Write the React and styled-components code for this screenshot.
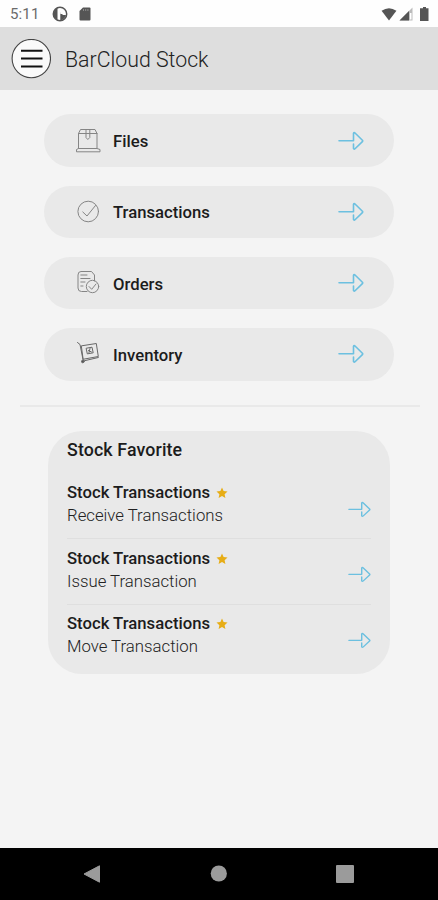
import React from 'react';
import styled, { createGlobalStyle } from 'styled-components';

const GlobalStyle = createGlobalStyle`
  * {
    box-sizing: border-box;
  }
  body {
    margin: 0;
    background: #f4f4f4;
    font-family: Roboto, 'Liberation Sans', sans-serif;
  }
`;

const S = {
  Screen: styled.div`
    display: flex;
    flex-direction: column;
    width: 438px;
    height: 900px;
    overflow: hidden;
    background: #f4f4f4;
  `,
  StatusBar: styled.div`
    display: flex;
    align-items: center;
    height: 27.4px;
    flex: none;
    padding: 1px 6px 0 10px;
    background: #fefefe;
    color: #6b6b6b;
  `,
  Clock: styled.span`
    width: 42px;
    font-size: 15px;
    line-height: 18px;
    letter-spacing: 0.15px;
  `,
  StatusIcons: styled.div`
    display: flex;
    align-items: center;
    gap: ${(props) => props.$gap}px;
    margin-left: ${(props) => (props.$right ? 'auto' : 0)};
  `,
  Header: styled.header`
    display: flex;
    align-items: center;
    gap: 14px;
    height: 62.6px;
    flex: none;
    padding: 0 11px;
    background: #dedede;
  `,
  MenuButton: styled.button`
    width: 40px;
    height: 40px;
    padding: 0;
    border: 0;
    border-radius: 50%;
    background: none;
  `,
  Title: styled.h1`
    margin: 1px 0 0;
    font-size: 21.3px;
    font-weight: 300;
    color: #222;
  `,
  Menu: styled.nav`
    display: flex;
    flex-direction: column;
    gap: 18.8px;
    padding: 24.3px 44px 24.8px;
  `,
  MenuItem: styled.button`
    display: flex;
    align-items: center;
    width: 350px;
    height: 52.5px;
    padding: 0 30px 0 31px;
    border: 0;
    border-radius: 27px;
    background: #e9e9e9;
    color: #1c1c1c;
    font-family: inherit;
  `,
  MenuLabel: styled.span`
    flex: 1;
    margin: 3px 0 0 12px;
    text-align: left;
    font-size: 16.7px;
    font-weight: 500;
    line-height: 20px;
  `,
  Divider: styled.hr`
    width: 400px;
    height: 2px;
    flex: none;
    margin: 0 18px 23.5px 20px;
    border: 0;
    background: #e9e9e9;
  `,
  Card: styled.section`
    width: 342px;
    height: 243px;
    flex: none;
    margin-left: 48px;
    padding: 9px 19px 0;
    border-radius: 34px;
    background: #e9e9e9;
  `,
  CardTitle: styled.h2`
    margin: 0 0 14px;
    font-size: 17.8px;
    line-height: 20px;
    font-weight: 500;
    letter-spacing: 0.12px;
    color: #1c1c1c;
  `,
  Favorite: styled.div`
    display: flex;
    align-items: center;
    justify-content: space-between;
    height: 65.3px;
    border-bottom: ${(props) => (props.$last ? 'none' : '1px solid #dfdfdf')};
  `,
  FavoriteText: styled.div`
    padding-bottom: 2.6px;
  `,
  FavoriteArrow: styled.div`
    display: flex;
    padding-top: 7px;
  `,
  FavoriteName: styled.div`
    display: flex;
    align-items: center;
    gap: 6px;
    font-size: 16.7px;
    line-height: 22px;
    font-weight: 500;
    color: #1c1c1c;
  `,
  FavoriteAction: styled.div`
    font-size: 16.75px;
    line-height: 23px;
    font-weight: 300;
    color: #222;
  `,
  NavBar: styled.footer`
    display: flex;
    align-items: center;
    justify-content: space-between;
    height: 52.5px;
    flex: none;
    margin-top: auto;
    padding: 0 84px 0 83px;
    background: #000;
  `,
};

const Arrow = ({ small }) => (
  <svg
    width={small ? 23 : 26}
    height={small ? 17 : 20}
    viewBox="0 0 26 20"
    preserveAspectRatio="none"
    fill="none"
    stroke="#6cc0e0"
    strokeWidth="1.6"
    strokeLinecap="round"
    strokeLinejoin="round"
  >
    <path d="M1 9.8H15.5V2.3Q16 1 17.3 2.3L24.4 9.3Q25 10 24.4 10.7L17.3 17.5Q16 18.8 15.5 17.5V13" />
  </svg>
);

const iconProps = {
  width: 26,
  height: 26,
  viewBox: '0 0 26 26',
  fill: 'none',
  stroke: '#858585',
  strokeWidth: 1,
  strokeLinecap: 'round',
  strokeLinejoin: 'round',
};

const BoxIcon = () => (
  <svg {...iconProps}>
    <path d="M3.5 5.5L5.5 1.5H20L22 5.5V20.5H3.5V5.5H22M11 1.5V9.5L12.8 11.5L14.8 9.5V1.5" />
    <path d="M3.5 20.5L1.5 21.5V23.8H25V21.5L22 20.5" />
  </svg>
);

const CheckIcon = () => (
  <svg {...iconProps}>
    <circle cx="13.2" cy="12.5" r="10.3" />
    <path d="M7.8 13L12 17L20.5 6.5" />
  </svg>
);

const OrderIcon = () => (
  <svg {...iconProps}>
    <path d="M12 21.5H6.5Q3 21.5 3 18V5Q3 1.5 6 1.5H16.5L19.5 5V11M5.8 5H12M5.8 8.5H15M5.8 12H10M5.8 16H8" />
    <circle cx="17.5" cy="16.5" r="6.2" />
    <path d="M14 16.5L16.7 19.3L21 14" />
  </svg>
);

const InventoryIcon = () => (
  <svg {...iconProps} stroke="#686868">
    <path d="M2.5 1.5L5 3.5L8.3 20L23.3 16.5" />
    <path d="M6.7 4.8L21.3 2.5L23.3 15.5L8.5 18.2Z" />
    <path d="M11.5 7.2L17 6.2L18.2 11.8L12.7 12.8ZM13.5 9.5L16.5 11M15 7.5L14 11.5" />
    <circle cx="7.8" cy="20.5" r="1.3" fill="#555" />
  </svg>
);

const Star = () => (
  <svg width="12" height="12" viewBox="0 0 24 24" fill="#e7ad16">
    <path d="M12 1L15.2 8.2L23 9L17.2 14.3L18.8 22L12 18L5.2 22L6.8 14.3L1 9L8.8 8.2Z" />
  </svg>
);

const MenuIcon = () => (
  <svg width="40" height="40" viewBox="0 0 40 40">
    <circle cx="20.3" cy="19.6" r="19.2" fill="#fafafa" stroke="#444" strokeWidth="1.1" />
    <path d="M10 11.8H31.5M10 19.5H31.5M10 27.5H31.5" stroke="#111" strokeWidth="2.1" />
  </svg>
);

const menuItems = [
  { label: 'Files', Icon: BoxIcon },
  { label: 'Transactions', Icon: CheckIcon },
  { label: 'Orders', Icon: OrderIcon },
  { label: 'Inventory', Icon: InventoryIcon },
];

const favorites = ['Receive Transactions', 'Issue Transaction', 'Move Transaction'];

const StatusBar = () => (
  <S.StatusBar>
    <S.Clock>5:11</S.Clock>
    <S.StatusIcons $gap={11}>
      <svg width="16" height="16" viewBox="0 0 16 16">
        <circle cx="8" cy="8" r="6.7" fill="#fff" stroke="#555" strokeWidth="1.5" />
        <path d="M5.5 1.8V14Q1.5 12 1.5 8Q2 3 5.5 1.8Z" fill="#555" />
        <path d="M8.3 4.5V14.3Q13 13.5 14 9H10.5V6.5H8.3" fill="#555" />
        <path d="M8.3 5H11V8H8.3Z" fill="#fff" />
      </svg>
      <svg width="12" height="14" viewBox="0 0 12 14">
        <path d="M4 .5H10.5Q11.5 .5 11.5 1.5V12.5Q11.5 13.5 10.5 13.5H1.5Q.5 13.5 .5 12.5V4Z" fill="#555" />
        <path d="M4.5 2V4M6.7 2V4M8.9 2V4" stroke="#999" strokeWidth=".8" />
      </svg>
    </S.StatusIcons>
    <S.StatusIcons $gap={2} $right>
      <svg width="16" height="13" viewBox="0 0 16 14">
        <path d="M0 3Q8 -2.5 16 3L8 13.5Z" fill="#555" />
      </svg>
      <svg width="14" height="14" viewBox="0 0 14 14">
        <path d="M13.5 .5V13.5H.5Z" fill="#bbb" />
        <path d="M10 4V13.5H.5Z" fill="#555" />
        <path d="M11.7 6V12.5" stroke="#fff" strokeWidth="1.6" />
      </svg>
      <svg width="17" height="14" viewBox="0 0 17 14">
        <path d="M8 0H11V1.2H13.5V14H5V1.2H8Z" fill="#555" />
      </svg>
    </S.StatusIcons>
  </S.StatusBar>
);

const App = () => (
  <S.Screen>
    <GlobalStyle />
    <StatusBar />
    <S.Header>
      <S.MenuButton type="button" aria-label="Menu">
        <MenuIcon />
      </S.MenuButton>
      <S.Title>BarCloud Stock</S.Title>
    </S.Header>
    <S.Menu>
      {menuItems.map(({ label, Icon }) => (
        <S.MenuItem type="button" key={label}>
          <Icon />
          <S.MenuLabel>{label}</S.MenuLabel>
          <Arrow />
        </S.MenuItem>
      ))}
    </S.Menu>
    <S.Divider />
    <S.Card>
      <S.CardTitle>Stock Favorite</S.CardTitle>
      {favorites.map((action, index) => (
        <S.Favorite key={action} $last={index === favorites.length - 1}>
          <S.FavoriteText>
            <S.FavoriteName>
              Stock Transactions
              <Star />
            </S.FavoriteName>
            <S.FavoriteAction>{action}</S.FavoriteAction>
          </S.FavoriteText>
          <S.FavoriteArrow>
            <Arrow small />
          </S.FavoriteArrow>
        </S.Favorite>
      ))}
    </S.Card>
    <S.NavBar>
      <svg width="18" height="18" viewBox="0 0 18 18">
        <path d="M1 9L16.5 .8V17.2Z" fill="#9b9b9b" stroke="#9b9b9b" strokeLinejoin="round" />
      </svg>
      <svg width="17" height="17" viewBox="0 0 17 17">
        <circle cx="8.8" cy="8.5" r="8.1" fill="#9b9b9b" />
      </svg>
      <svg width="18" height="18" viewBox="0 0 18 18">
        <rect width="18" height="18" rx="1" fill="#9b9b9b" />
      </svg>
    </S.NavBar>
  </S.Screen>
);

export default App;
